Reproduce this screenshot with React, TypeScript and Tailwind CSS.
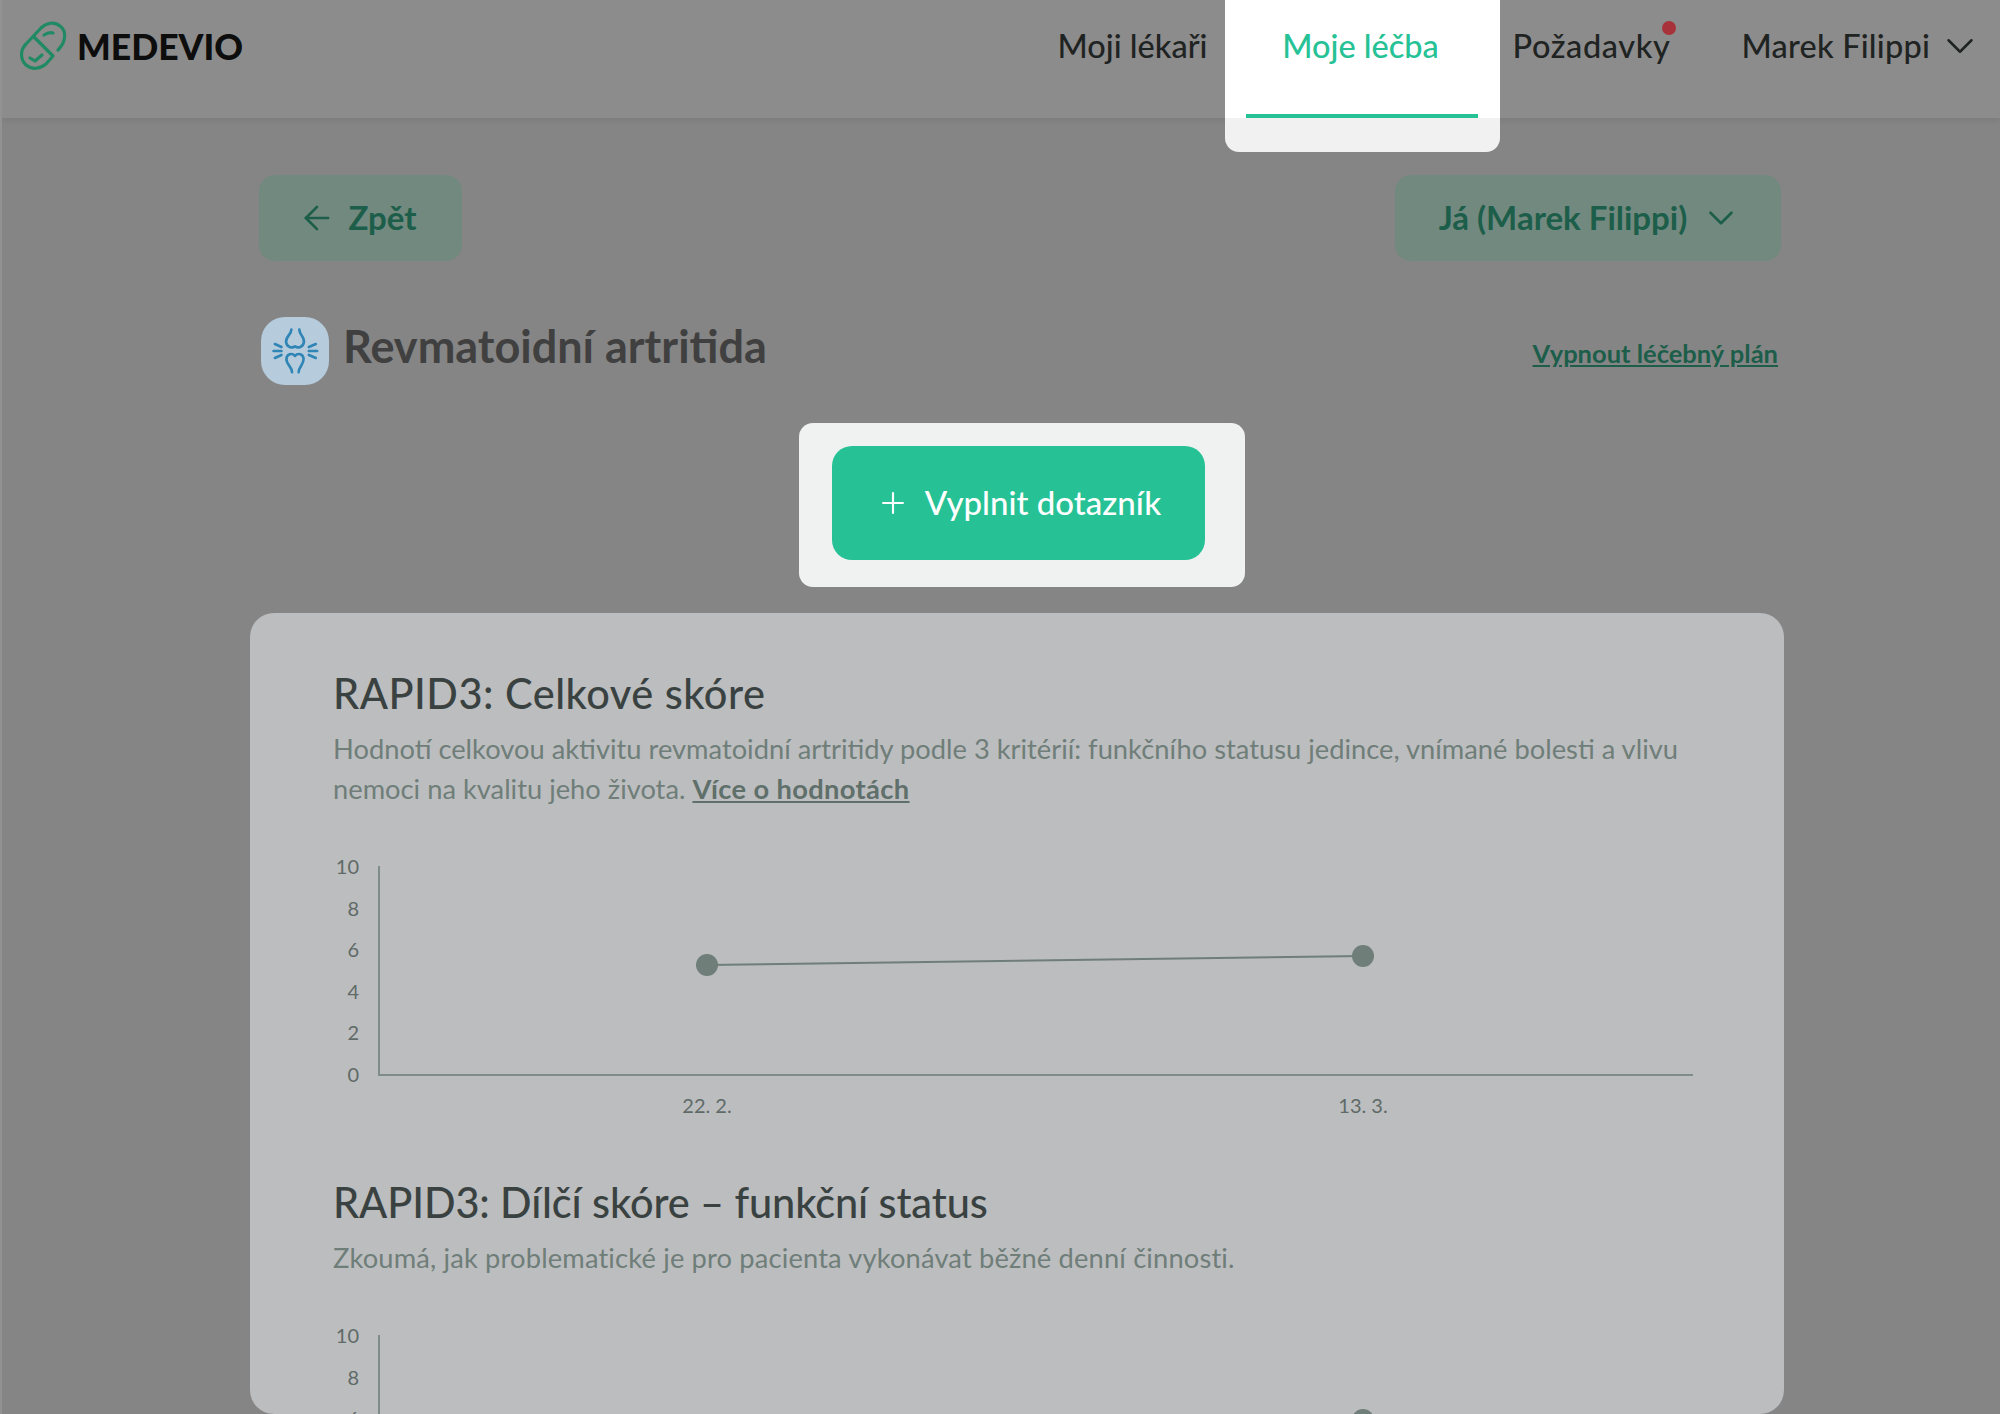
import { ArrowLeft, ChevronDown, Plus } from 'lucide-react';

const font = { fontFamily: 'Lato, "Noto Sans", sans-serif' };

function PillLogo() {
  return (
    <svg viewBox="0 0 100 90" className="w-[100px] h-[90px] shrink-0 -ml-[2px] -mr-[22px]" fill="none" stroke="#1f8a63" strokeWidth="3.2" strokeLinecap="round" strokeLinejoin="round">
      <path d="M58 50 C66 42 67 31 60 26 C54 21 46 23 41 28 L26 44 C20 50 20 59 26 65 C32 70 40 69 46 64 L53 56 L34 37" />
      <path d="M44 35 C47 33 50 32 53 33" />
      <path d="M30 58 L35 61 L42 55" />
    </svg>
  );
}

function JointIcon() {
  return (
    <svg viewBox="30 52 206 206" className="w-full h-full" fill="none" stroke="#2f85b5" strokeWidth="8" strokeLinecap="round" strokeLinejoin="round">
      <path d="M122 90 C122 105 104 112 106 128 C108 144 124 147 133 141 C142 147 158 144 160 128 C162 112 146 105 146 90" />
      <path d="M124 219 C124 203 106 195 107 179 C108 163 124 160 133 170 C142 160 158 163 159 179 C160 195 144 203 144 219" />
      <path d="M68 155 H92 M72 134 L92 143 M72 176 L92 167 M175 155 H200 M175 143 L196 134 M175 167 L196 176" />
    </svg>
  );
}

function Chart({ a, b }: { a: number; b: number }) {
  const ticks = [10, 8, 6, 4, 2, 0];
  return (
    <svg viewBox="0 -12 1400 274" className="w-[1400px] h-[274px] block">
      {ticks.map((t, i) => (
        <text key={t} x="26" y={8 + i * 41.6} textAnchor="end" fontSize="20" fill="#5f6a67" style={font}>
          {t}
        </text>
      ))}
      <path d="M46 0 V209 H1360" fill="none" stroke="#7f8c88" strokeWidth="2" />
      <line x1="374" y1={a} x2="1030" y2={b} stroke="#6f7e79" strokeWidth="2" />
      <circle cx="374" cy={a} r="11" fill="#6f7e79" />
      <circle cx="1030" cy={b} r="11" fill="#6f7e79" />
      <text x="374" y="247" textAnchor="middle" fontSize="20" fill="#5f6a67" style={font}>22. 2.</text>
      <text x="1030" y="247" textAnchor="middle" fontSize="20" fill="#5f6a67" style={font}>13. 3.</text>
    </svg>
  );
}

export default function App() {
  return (
    <div className="h-[1414px] overflow-hidden bg-[#858585] border-l-2 border-[#929292]" style={font}>
      <header className="h-[118px] bg-[#8c8c8c] shadow-[0_2px_6px_rgba(0,0,0,0.08)] flex items-start">
        <div className="flex items-center h-[90px]">
          <PillLogo />
          <span className="text-[35.5px] font-black text-[#0d0d0d] -ml-[1px] mt-[3px]">MEDEVIO</span>
        </div>
        <nav className="ml-auto flex items-start text-[32.5px] font-medium text-[#1f2322]">
          <span className="mt-[26px] leading-[40px] mr-[17px]">Moji lékaři</span>
          <div className="w-[275px] h-[152px] rounded-b-[14px] overflow-hidden bg-[#f1f1f1] relative z-10">
            <div className="h-[118px] bg-white flex flex-col items-center">
              <span className="mt-[26px] leading-[40px] text-[#26c296] -ml-[3px]">Moje léčba</span>
              <div className="mt-auto w-[232px] h-[4px] bg-[#26c296]" />
            </div>
          </div>
          <span className="mt-[26px] leading-[40px] ml-[13px] relative tracking-[0.6px]">
            Požadavky
            <span className="absolute -top-[5px] -right-[5px] w-[14px] h-[14px] rounded-full bg-[#a83239]" />
          </span>
          <span className="mt-[26px] leading-[40px] ml-[71px] flex items-center gap-[7px] pr-[17px] tracking-[0.2px]">
            Marek Filippi
            <ChevronDown size={46} strokeWidth={1.3} className="-my-[3px]" />
          </span>
        </nav>
      </header>

      <main className="ml-[257px] w-[1522px] pt-[57px]">
        <div className="flex justify-between h-[86px]">
          <button className="w-[203px] rounded-[16px] bg-[#72897f] text-[#1c5e4a] text-[33px] font-bold flex items-center justify-center gap-[12px] pr-[6px]">
            <ArrowLeft size={38} strokeWidth={1.7} />
            Zpět
          </button>
          <button className="w-[386px] rounded-[16px] bg-[#72897f] text-[#1c5e4a] text-[33px] font-bold flex items-center justify-center gap-[13px] pl-[5px]">
            Já (Marek Filippi)
            <ChevronDown size={42} strokeWidth={1.5} />
          </button>
        </div>

        <div className="mt-[56px] h-[68px] flex items-center justify-between">
          <div className="flex items-center gap-[14px]">
            <div className="w-[68px] h-[68px] ml-[2px] rounded-[24px] bg-[#b6cbdb] shrink-0">
              <JointIcon />
            </div>
            <h1 className="text-[45px] font-bold text-[#404040] -mt-[8px]">Revmatoidní artritida</h1>
          </div>
          <a className="text-[25.5px] font-bold text-[#1c5e4a] underline mt-[5px] mr-[3px]">Vypnout léčebný plán</a>
        </div>

        <div className="mt-[38px] ml-[540px] w-[446px] h-[164px] rounded-[14px] bg-[#f0f1f1] pt-[23px] pl-[33px]">
          <button className="w-[373px] h-[114px] rounded-[20px] bg-[#26c296] text-white text-[33px] font-medium flex items-center justify-center gap-[15px]">
            <Plus size={34} strokeWidth={1.5} />
            Vyplnit dotazník
          </button>
        </div>

        <section className="mt-[26px] -ml-[9px] -mr-[3px] h-[801px] rounded-[24px] bg-[#bcbdbf] overflow-hidden pl-[83px] pt-[52px]">
          <h2 className="text-[41.5px] leading-[56px] font-medium text-[#3a4241] tracking-[0.5px]">RAPID3: Celkové skóre</h2>
          <p className="mt-[8px] w-[1370px] text-[27.3px] leading-[40px] text-[#6f7e79]">
            Hodnotí celkovou aktivitu revmatoidní artritidy podle 3 kritérií: funkčního statusu jedince, vnímané bolesti a vlivu nemoci na kvalitu jeho života.{' '}
            <a className="font-bold text-[#5f6f6a] underline tracking-[0.35px]">Více o hodnotách</a>
          </p>
          <div className="mt-[45px]">
            <Chart a={99} b={90} />
          </div>
          <h2 className="mt-[46px] text-[41.5px] leading-[56px] font-medium text-[#3a4241] -tracking-[0.1px]">RAPID3: Dílčí skóre – funkční status</h2>
          <p className="mt-[8px] text-[27.3px] leading-[40px] text-[#6f7e79] tracking-[0.15px]">
            Zkoumá, jak problematické je pro pacienta vykonávat běžné denní činnosti.
          </p>
          <div className="mt-[45px]">
            <Chart a={120} b={85} />
          </div>
        </section>
      </main>
    </div>
  );
}
